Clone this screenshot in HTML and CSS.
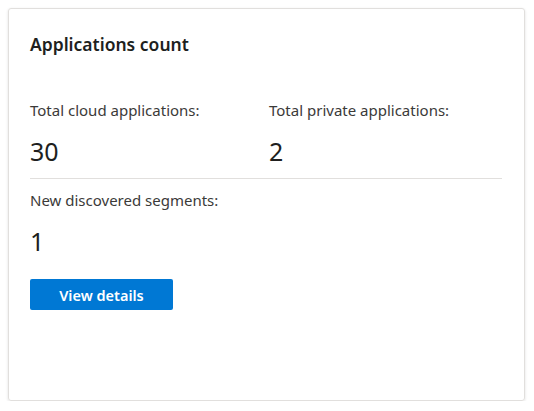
FILE: index.html
```html
<!DOCTYPE html>
<html lang="en">
<head>
    <meta charset="UTF-8">
    <meta name="viewport" content="width=device-width, initial-scale=1.0">
    <title>Applications count</title>
    <link rel="stylesheet" href="styles.css">
</head>
<body>

    <div class="card">
        <div class="card-title">Applications count</div>

        <div class="stats">
            <div class="stat">
                <div class="stat-label">Total cloud applications:</div>
                <div class="stat-value">30</div>
            </div>
            <div class="stat">
                <div class="stat-label">Total private applications:</div>
                <div class="stat-value">2</div>
            </div>
        </div>

        <div class="stat stat-segments">
            <div class="stat-label">New discovered segments:</div>
            <div class="stat-value">1</div>
        </div>

        <button class="btn-primary">View details</button>
    </div>

</body>
</html>
```

FILE: styles.css
```css
body {
    margin: 0;
    padding: 8px 8px 0 8px;
    background-color: #ffffff;
    font-family: 'Segoe UI', 'Noto Sans', 'Open Sans', sans-serif;
    color: #201f1e;
}

.card {
    width: 517px;
    height: 393px;
    box-sizing: border-box;
    border: 1px solid #e1dfdd;
    border-radius: 3px;
    box-shadow: 0 1px 3px rgba(0, 0, 0, 0.12);
    padding: 24px 22px 0 21px;
}

.card-title {
    font-size: 17.5px;
    font-weight: 600;
    line-height: 22px;
}

.stats {
    display: grid;
    grid-template-columns: 239px 1fr;
    margin-top: 45px;
    padding-bottom: 11px;
    border-bottom: 1px solid #e1dfdd;
}

.stat-label {
    font-size: 15px;
    line-height: 20px;
    color: #3b3a39;
}

.stat-value {
    font-size: 25px;
    line-height: 32px;
    margin-top: 15px;
}

.stat-segments {
    margin-top: 11px;
}

.btn-primary {
    display: block;
    margin-top: 22px;
    width: 143px;
    height: 31px;
    border: none;
    border-radius: 2px;
    background-color: #0078d4;
    color: #ffffff;
    font-family: inherit;
    font-size: 14.5px;
    font-weight: 600;
    cursor: pointer;
}
```
